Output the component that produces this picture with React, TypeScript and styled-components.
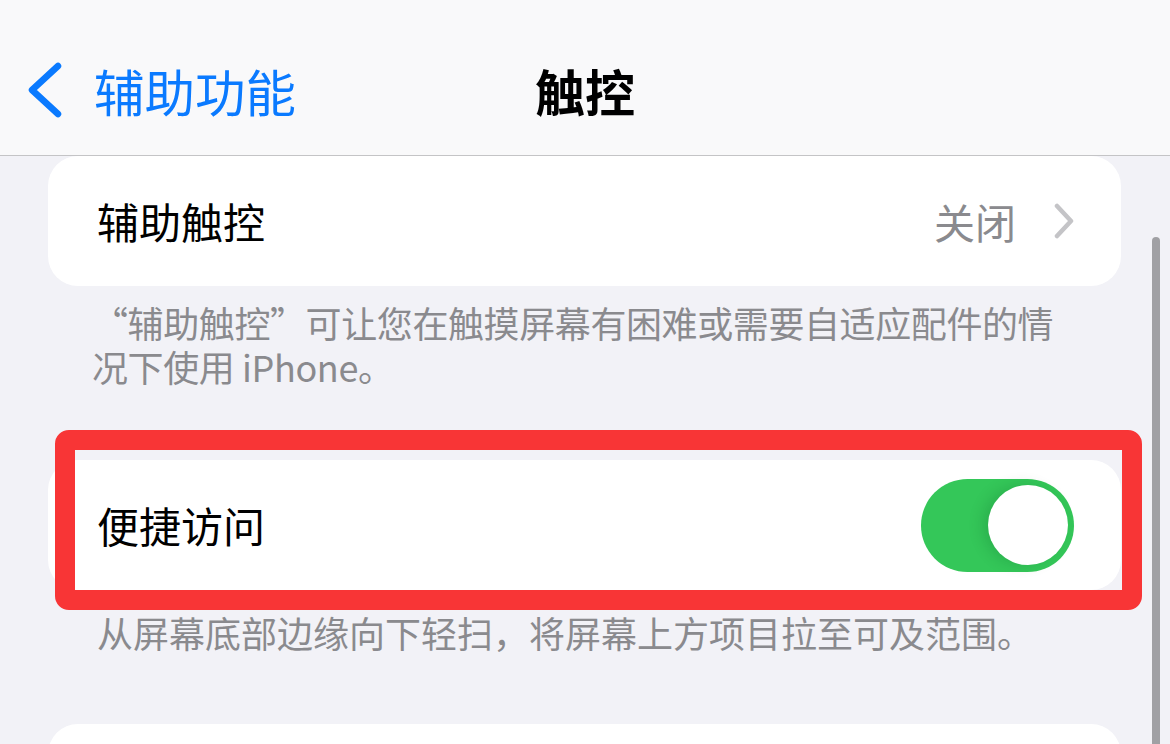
import React from "react";
import styled, { createGlobalStyle } from "styled-components";

const Global = createGlobalStyle`
  html, body { margin: 0; padding: 0; background: #f2f2f7; }
  body { font-family: "Noto Sans CJK SC", "Noto Sans", sans-serif; -webkit-font-smoothing: antialiased; }
`;

const Screen = styled.div`
  position: relative;
  width: 1170px;
  height: 744px;
  overflow: hidden;
  background: #f2f2f7;
`;

const NavBar = styled.header`
  height: 156px;
  box-sizing: border-box;
  padding-top: 62px;
  background: #f9f9fa;
  border-bottom: 1px solid #c4c4c6;
  display: grid;
  grid-template-columns: 1fr auto 1fr;
  align-items: start;
`;

const BackButton = styled.div`
  display: flex;
  align-items: center;
  gap: 31px;
  padding-left: 27px;
  height: 56px;
  color: #0a7aff;
  font-size: 50.5px;
  line-height: 56px;
`;

const Title = styled.h1`
  margin: 0;
  height: 56px;
  font-size: 50px;
  line-height: 56px;
  font-weight: 700;
  color: #000;
`;

const Content = styled.main`
  padding: 0 49px 0 48px;
  display: flex;
  flex-direction: column;
`;

const Card = styled.section<{ $top?: number }>`
  background: #fff;
  border-radius: 30px;
  margin-top: ${(p) => p.$top ?? 0}px;
`;

const Row = styled.div`
  height: 130px;
  display: flex;
  align-items: center;
  padding: 0 47px 0 49px;
  box-sizing: border-box;
`;

const Label = styled.span`
  flex: 1;
  font-size: 42px;
  color: #000;
  line-height: 50px;
`;

const Value = styled.span`
  font-size: 41px;
  color: #8a8a8e;
  line-height: 50px;
  margin-right: 38px;
`;

const Footer = styled.p<{ $pt: number; $tight?: boolean }>`
  margin: 0;
  padding: ${(p) => p.$pt}px 40px 0 ${(p) => (p.$tight ? 44 : 49)}px;
  font-size: 36px;
  line-height: 44px;
  letter-spacing: ${(p) => (p.$tight ? "-0.4px" : "0")};
  color: #8a8a8e;
`;

const Highlight = styled.div`
  position: relative;
  margin-top: 72px;
  &::after {
    content: "";
    position: absolute;
    top: -30px;
    right: -21px;
    bottom: -20px;
    left: 7px;
    border: 20px solid #f83536;
    border-radius: 14px;
    pointer-events: none;
  }
`;

const Toggle = styled.div<{ $on: boolean }>`
  position: relative;
  width: 153px;
  height: 93px;
  border-radius: 47px;
  background: ${(p) => (p.$on ? "#34c759" : "#e9e9ea")};
  flex-shrink: 0;
`;

const Knob = styled.div<{ $on: boolean }>`
  position: absolute;
  top: 6.5px;
  ${(p) => (p.$on ? "right: 6.5px;" : "left: 6.5px;")}
  width: 80px;
  height: 80px;
  border-radius: 50%;
  background: #fff;
  box-shadow: -6px 0 14px rgba(0, 80, 30, 0.18);
`;

const Scrollbar = styled.div`
  position: absolute;
  left: 1152px;
  top: 237px;
  width: 8px;
  height: 520px;
  border-radius: 4px;
  background: #a0a0a4;
`;

const Chevron = () => (
  <svg width="36" height="56" viewBox="0 0 36 56" fill="none">
    <path d="M31 4 L5 28 L31 52" stroke="#0a7aff" strokeWidth="6.5" strokeLinecap="round" strokeLinejoin="round" />
  </svg>
);

const Disclosure = () => (
  <svg width="20" height="36" viewBox="0 0 20 36" fill="none">
    <path d="M3 3 L17 18 L3 33" stroke="#c4c4c7" strokeWidth="4.5" strokeLinecap="round" strokeLinejoin="round" />
  </svg>
);

export default function App() {
  return (
    <Screen>
      <Global />
      <NavBar>
        <BackButton>
          <Chevron />
          <span>辅助功能</span>
        </BackButton>
        <Title>触控</Title>
        <div />
      </NavBar>
      <Content>
        <Card>
          <Row>
            <Label>辅助触控</Label>
            <Value>关闭</Value>
            <Disclosure />
          </Row>
        </Card>
        <Footer $pt={14} $tight>
          “辅助触控”可让您在触摸屏幕有困难或需要自适应配件的情
          <br />
          况下使用 iPhone。
        </Footer>
        <Highlight>
          <Card>
            <Row>
              <Label>便捷访问</Label>
              <Toggle $on>
                <Knob $on />
              </Toggle>
            </Row>
          </Card>
        </Highlight>
        <Footer $pt={20}>从屏幕底部边缘向下轻扫，将屏幕上方项目拉至可及范围。</Footer>
        <Card $top={70}>
          <Row />
        </Card>
      </Content>
      <Scrollbar />
    </Screen>
  );
}
